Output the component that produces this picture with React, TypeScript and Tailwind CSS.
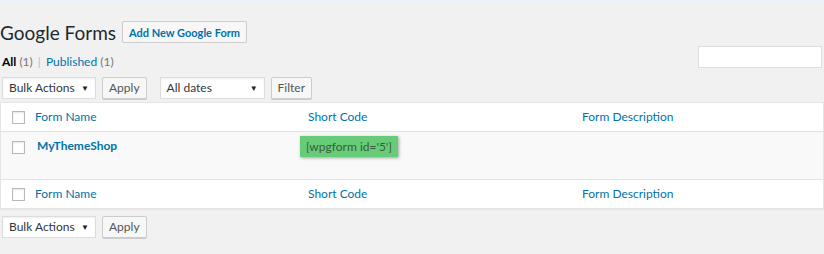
import React from "react";

const font = { fontFamily: 'Lato, "Open Sans", sans-serif' };

function Checkbox() {
  return (
    <span className="block h-[13px] w-[13px] border border-[#b4b9be] bg-white shadow-[inset_0_1px_2px_rgba(0,0,0,0.1)]" />
  );
}

function Select({ label, width }: { label: string; width: string }) {
  return (
    <div
      className={`flex h-[22px] items-center justify-between border border-[#ddd] bg-white pl-[6px] pr-[6px] text-[12px] text-[#32373c] shadow-[inset_0_1px_2px_rgba(0,0,0,0.07)] ${width}`}
    >
      <span>{label}</span>
      <span className="text-[8px] text-[#222]">▼</span>
    </div>
  );
}

function Button({ children, className = "" }: { children: React.ReactNode; className?: string }) {
  return (
    <button
      className={`block h-[22px] rounded-[2px] border border-[#ccc] bg-[#f7f7f7] px-[6px] text-[12px] leading-none text-[#555] shadow-[0_1px_0_#ccc] ${className}`}
    >
      {children}
    </button>
  );
}

function HeaderRow({ top }: { top?: boolean }) {
  return (
    <div
      className={`flex h-[29px] items-center bg-white text-[12px] text-[#0073aa] ${
        top ? "border-b border-[#e1e1e1]" : "border-t border-[#e1e1e1]"
      }`}
    >
      <div className="flex w-[24px] justify-end">
        <Checkbox />
      </div>
      <div className="w-[273px] pl-[10px]">Form Name</div>
      <div className="w-[274px] pl-[10px]">Short Code</div>
      <div className="flex-1 pl-[10px]">Form Description</div>
    </div>
  );
}

export default function App() {
  return (
    <div className="h-[254px] w-[824px] overflow-hidden bg-[#f1f1f1]" style={font}>
      <div className="h-[3px] bg-[#edf2f9]" />
      <div className="flex items-center gap-[6px] pt-[18px]">
        <h1 className="text-[19px] leading-none text-[#23282d]">Google Forms</h1>
        <button className="h-[22px] rounded-[2px] border border-[#ccc] bg-[#f7f7f7] px-[6px] text-[11px] font-bold leading-none text-[#0073aa]">
          Add New Google Form
        </button>
      </div>

      <div className="mt-[3px] flex items-end justify-between">
        <div className="pl-[2px] text-[12px] leading-[12px] text-[#555]">
          <span className="font-bold text-[#000]">All</span> <span className="text-[#777]">(1)</span>{" "}
          <span className="mx-[2px] text-[#bbb]">|</span>{" "}
          <span className="text-[#0073aa]">Published</span> <span className="text-[#777]">(1)</span>
        </div>
        <div className="mr-[2px] h-[22px] w-[124px] border border-[#ddd] bg-white" />
      </div>

      <div className="mt-[9px] flex items-center gap-[6px] px-[2px]">
        <Select label="Bulk Actions" width="w-[94px]" />
        <Button>Apply</Button>
        <Select label="All dates" width="ml-[7px] w-[105px]" />
        <Button>Filter</Button>
      </div>

      <div className="mt-[3px] border border-[#e5e5e5] bg-white shadow-[0_1px_1px_rgba(0,0,0,0.04)]">
        <HeaderRow top />
        <div className="flex h-[47px] items-start bg-[#f9f9f9] pt-[1px]">
          <div className="flex w-[24px] justify-end pt-[8px]">
            <Checkbox />
          </div>
          <div className="w-[275px] pl-[12px] pt-[4px] text-[12px] font-bold text-[#0073aa]">MyThemeShop</div>
          <div className="w-[272px]">
            <span className="inline-block bg-[#66cc77] px-[6px] py-[3px] text-[12px] leading-[15px] text-[#3b5b3b] shadow-[1px_1px_3px_rgba(0,0,0,0.35)]">
              [wpgform id='5']
            </span>
          </div>
          <div className="flex-1" />
        </div>
        <HeaderRow />
      </div>

      <div className="mt-[7px] flex items-center gap-[6px] px-[2px]">
        <Select label="Bulk Actions" width="w-[94px]" />
        <Button>Apply</Button>
      </div>
    </div>
  );
}
